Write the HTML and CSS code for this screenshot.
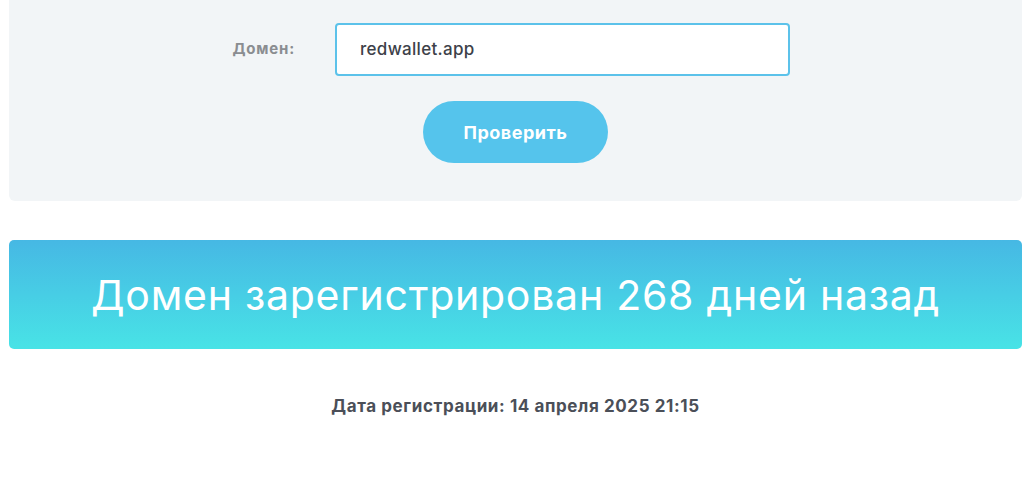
FILE: index.html
```html
<!DOCTYPE html>
<html lang="ru">
<head>
<meta charset="utf-8">
<title>Проверка домена</title>
<link rel="stylesheet" href="styles.css">
</head>
<body>
<div class="page">
  <form class="panel">
    <div class="row">
      <label class="label" for="domain">Домен:</label>
      <div class="field"><span class="value">redwallet.app</span></div>
    </div>
    <div class="actions">
      <button type="button" class="btn">Проверить</button>
    </div>
  </form>
  <div class="result">Домен зарегистрирован 268 дней назад</div>
  <p class="date">Дата регистрации: 14 апреля 2025 21:15</p>
</div>
</body>
</html>
```
FILE: styles.css
```css
* { box-sizing: border-box; }
html, body { margin: 0; padding: 0; background: #ffffff; }
body { font-family: "Inter", "Open Sans", "DejaVu Sans", sans-serif; }
.page { padding: 0 8px 0 9px; }
.panel {
  background: #f2f5f7;
  border-radius: 0 0 6px 6px;
  padding: 23px 0 38px;
  display: flex;
  flex-direction: column;
  align-items: center;
  gap: 25px;
}
.row {
  display: flex;
  align-items: center;
  gap: 40px;
  padding-right: 9px;
}
.label {
  width: 63px;
  text-align: right;
  font-size: 15px;
  font-weight: 700;
  letter-spacing: 0.8px;
  color: #8a8d91;
  margin-top: -2px;
  white-space: nowrap;
}
.field {
  width: 455px;
  height: 53px;
  border: 2px solid #5cc2ea;
  border-radius: 4px;
  background: #fff;
  display: flex;
  align-items: center;
  padding-left: 23px;
}
.value {
  font-size: 17px;
  font-weight: 500;
  letter-spacing: 0.3px;
  color: #3d4149;
  margin-top: -2px;
}
.actions { display: flex; justify-content: center; }
.btn {
  width: 185px;
  height: 62px;
  border: none;
  border-radius: 31px;
  background: #55c4ec;
  color: #fff;
  font-family: inherit;
  font-size: 18px;
  font-weight: 700;
  letter-spacing: 0.5px;
  padding: 0;
}
.result {
  margin-top: 39px;
  height: 109px;
  border-radius: 5px;
  background: linear-gradient(180deg, #46b8e4 0%, #48e3e6 100%);
  color: #fff;
  display: flex;
  align-items: center;
  justify-content: center;
  font-size: 41px;
  font-weight: 400;
  letter-spacing: 0.75px;
}
.date {
  margin: 47px 0 0;
  text-align: center;
  font-size: 17px;
  font-weight: 700;
  letter-spacing: 0.6px;
  color: #4b4f58;
}
```
